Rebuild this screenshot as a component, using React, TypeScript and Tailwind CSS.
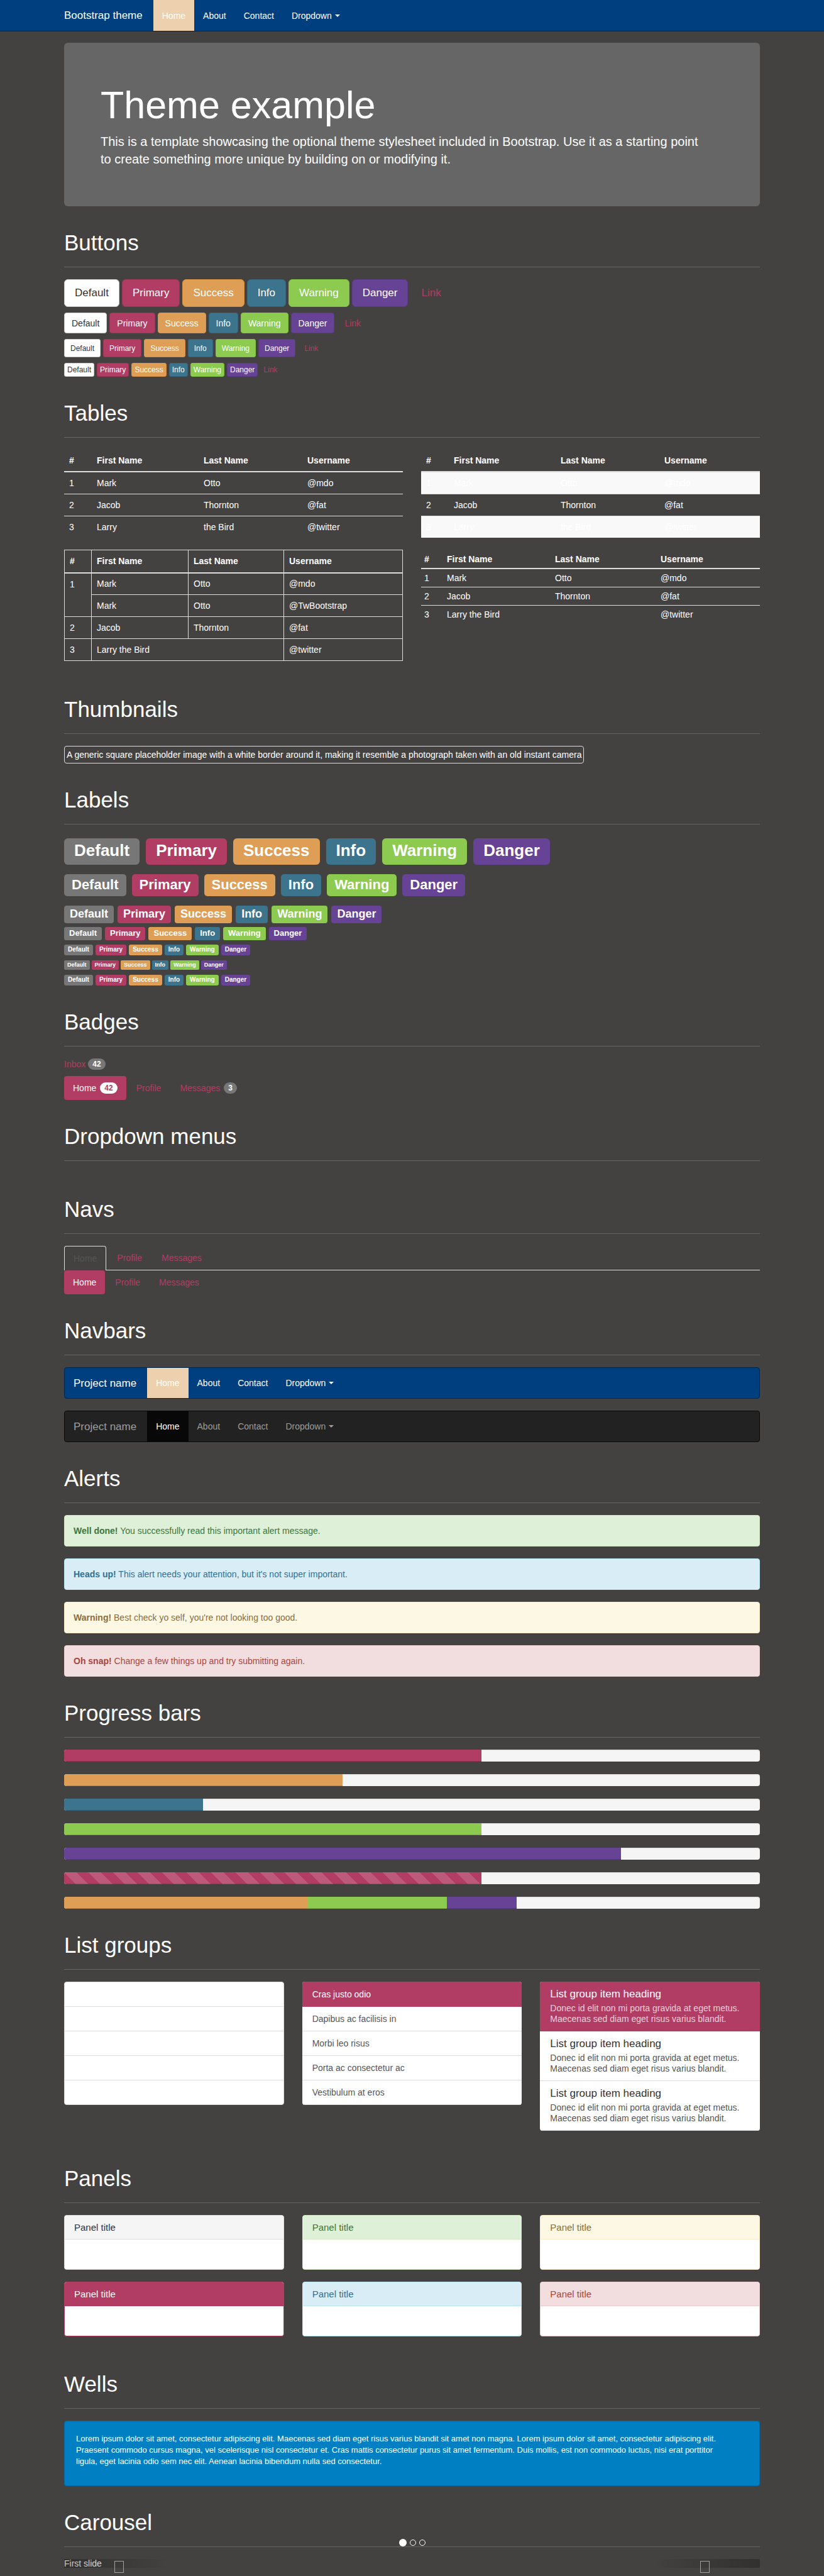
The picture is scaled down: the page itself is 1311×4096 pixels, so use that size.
import type { ReactNode } from 'react';

const BUTTONS = [
  { name: 'Default', tone: 'bg-white border-[#cccccc] text-[#333333]' },
  { name: 'Primary', tone: 'bg-[#b13c64] border-[#9e3659] text-white' },
  { name: 'Success', tone: 'bg-[#de9e56] border-[#da9240] text-white' },
  { name: 'Info', tone: 'bg-[#3c738d] border-[#34657b] text-white' },
  { name: 'Warning', tone: 'bg-[#8cca50] border-[#7fc43c] text-white' },
  { name: 'Danger', tone: 'bg-[#674396] border-[#5b3b85] text-white' },
  { name: 'Link', tone: 'border-transparent text-[#b13c64]' },
];

const BUTTON_SIZES = [
  'h-[44px] px-[16px] text-[17px] rounded-md',
  'h-[33px] px-[11px] text-[14px] rounded',
  'h-[29px] px-[9px] text-[12px] rounded-[3px]',
  'h-[22px] px-[4px] text-[12px] rounded-[3px]',
];

const LABELS = [
  { name: 'Default', tone: 'bg-[#777777]' },
  { name: 'Primary', tone: 'bg-[#b13c64]' },
  { name: 'Success', tone: 'bg-[#de9e56]' },
  { name: 'Info', tone: 'bg-[#3c738d]' },
  { name: 'Warning', tone: 'bg-[#8cca50]' },
  { name: 'Danger', tone: 'bg-[#674396]' },
];

const LABEL_SIZES = [
  { row: 'gap-[10px] mt-[3px]', label: 'text-[26px] leading-[38px] px-[16px] pb-[4px] rounded-md' },
  { row: 'gap-[9px] mt-[15px]', label: 'text-[22px] leading-[33px] px-[12px] pb-[2px] rounded-[5px]' },
  { row: 'gap-[6px] mt-[15px]', label: 'text-[18px] leading-[26px] px-[9px] pb-[2px] rounded' },
  { row: 'gap-[5px] mt-[6px]', label: 'text-[13px] leading-[19px] px-[8px] pb-[2px] rounded-[3px]' },
  { row: 'gap-[4px] mt-[7px]', label: 'text-[10px] leading-[16px] px-[6px] pb-px rounded-[3px]' },
  { row: 'gap-[3px] mt-[8px]', label: 'text-[9px] leading-[14px] px-[5px] pb-px rounded-[2px]' },
  { row: 'gap-[4px] mt-[8px]', label: 'text-[10px] leading-[16px] px-[6px] pb-px rounded-[3px]' },
];

const ALERTS = [
  { lead: 'Well done!', text: 'You successfully read this important alert message.', tone: 'bg-[#dff0d8] border-[#d6e9c6] text-[#3c763d]' },
  { lead: 'Heads up!', text: "This alert needs your attention, but it's not super important.", tone: 'bg-[#d9edf7] border-[#bce8f1] text-[#31708f]' },
  { lead: 'Warning!', text: "Best check yo self, you're not looking too good.", tone: 'bg-[#fcf8e3] border-[#faebcc] text-[#8a6d3b]' },
  { lead: 'Oh snap!', text: 'Change a few things up and try submitting again.', tone: 'bg-[#f2dede] border-[#ebccd1] text-[#a94442]' },
];

const STRIPES =
  'bg-[linear-gradient(45deg,rgba(255,255,255,.15)_25%,transparent_25%,transparent_50%,rgba(255,255,255,.15)_50%,rgba(255,255,255,.15)_75%,transparent_75%,transparent)] bg-[length:39px_39px]';

const BARS = [
  [{ value: 60, tone: 'bg-[#b13c64]' }],
  [{ value: 40, tone: 'bg-[#de9e56]' }],
  [{ value: 20, tone: 'bg-[#3c738d]' }],
  [{ value: 60, tone: 'bg-[#8cca50]' }],
  [{ value: 80, tone: 'bg-[#674396]' }],
  [{ value: 60, tone: `bg-[#b13c64] ${STRIPES}` }],
  [
    { value: 35, tone: 'bg-[#de9e56]' },
    { value: 20, tone: 'bg-[#8cca50]' },
    { value: 10, tone: 'bg-[#674396]' },
  ],
];

const ITEMS = ['Cras justo odio', 'Dapibus ac facilisis in', 'Morbi leo risus', 'Porta ac consectetur ac', 'Vestibulum at eros'];

const PANELS = [
  { border: 'border-[#dddddd]', head: 'bg-[#f5f5f5] text-[#333333]' },
  { border: 'border-[#d6e9c6]', head: 'bg-[#dff0d8] text-[#3c763d]' },
  { border: 'border-[#faebcc]', head: 'bg-[#fcf8e3] text-[#8a6d3b]' },
  { border: 'border-[#b13c64]', head: 'bg-[#b13c64] text-white' },
  { border: 'border-[#bce8f1]', head: 'bg-[#d9edf7] text-[#31708f]' },
  { border: 'border-[#ebccd1]', head: 'bg-[#f2dede] text-[#a94442]' },
];

const HEADINGS = ['#', 'First Name', 'Last Name', 'Username'];
const PEOPLE = [
  ['1', 'Mark', 'Otto', '@mdo'],
  ['2', 'Jacob', 'Thornton', '@fat'],
  ['3', 'Larry', 'the Bird', '@twitter'],
];

function Section({ title, children }: { title: string; children?: ReactNode }) {
  return (
    <section className="flow-root">
      <h1 className="mt-[39px] mb-[19px] border-b border-[#666666] pb-[19px] text-[35px] leading-[38px]">{title}</h1>
      {children}
    </section>
  );
}

function Caret() {
  return <span className="ml-[5px] inline-block border-x-4 border-t-4 border-x-transparent border-t-current align-middle" />;
}

type NavTone = { bar: string; brand: string; active: string; link: string };

const BLUE: NavTone = { bar: 'bg-[#003f7f] border-[#00264c]', brand: 'text-white', active: 'bg-[#edd0ae] text-white', link: 'text-white' };
const DARK: NavTone = { bar: 'bg-[#222222] border-[#080808]', brand: 'text-[#9d9d9d]', active: 'bg-[#080808] text-white', link: 'text-[#9d9d9d]' };

function NavItems({ brand, tone }: { brand: string; tone: NavTone }) {
  return (
    <>
      <a href="#" className={`flex items-center pr-[17px] text-[17px] leading-[19px] ${tone.brand}`}>{brand}</a>
      <a href="#" className={`flex items-center px-[14px] ${tone.active}`}>Home</a>
      <a href="#" className={`flex items-center px-[14px] ${tone.link}`}>About</a>
      <a href="#" className={`flex items-center px-[14px] ${tone.link}`}>Contact</a>
      <button type="button" className={`flex items-center px-[14px] ${tone.link}`}>
        Dropdown
        <Caret />
      </button>
    </>
  );
}

function Navbar({ tone }: { tone: NavTone }) {
  return (
    <nav className={`flex h-[50px] rounded border pl-[14px] ${tone.bar}`}>
      <NavItems brand="Project name" tone={tone} />
    </nav>
  );
}

function PeopleTable({ striped }: { striped?: boolean }) {
  return (
    <table className="w-full table-fixed border-collapse text-left">
      <colgroup>
        <col className="w-[44px]" />
        <col className="w-[170px]" />
        <col className="w-[165px]" />
        <col />
      </colgroup>
      <thead>
        <tr className="h-[35px] border-b-2 border-[#dddddd]">
          {HEADINGS.map((h) => <th key={h} className="px-[8px] font-bold">{h}</th>)}
        </tr>
      </thead>
      <tbody className="divide-y divide-[#dddddd]">
        {PEOPLE.map((row, i) => (
          <tr key={row[0]} className={striped && i % 2 === 0 ? 'h-[35px] bg-[#f9f9f9]' : 'h-[35px]'}>
            {row.map((cell) => <td key={cell} className="px-[8px]">{cell}</td>)}
          </tr>
        ))}
      </tbody>
    </table>
  );
}

function BorderedTable() {
  const td = 'border border-[#dddddd] px-[8px]';
  return (
    <table className="w-full table-fixed border-collapse text-left">
      <colgroup>
        <col className="w-[43px]" />
        <col className="w-[154px]" />
        <col className="w-[152px]" />
        <col />
      </colgroup>
      <thead>
        <tr className="h-[36px]">
          {HEADINGS.map((h) => <th key={h} className="border border-b-2 border-[#dddddd] px-[8px] font-bold">{h}</th>)}
        </tr>
      </thead>
      <tbody>
        <tr className="h-[35px]">
          <td rowSpan={2} className="border border-[#dddddd] px-[8px] pt-[8px] align-top">1</td>
          <td className={td}>Mark</td>
          <td className={td}>Otto</td>
          <td className={td}>@mdo</td>
        </tr>
        <tr className="h-[35px]">
          <td className={td}>Mark</td>
          <td className={td}>Otto</td>
          <td className={td}>@TwBootstrap</td>
        </tr>
        <tr className="h-[35px]">
          <td className={td}>2</td>
          <td className={td}>Jacob</td>
          <td className={td}>Thornton</td>
          <td className={td}>@fat</td>
        </tr>
        <tr className="h-[35px]">
          <td className={td}>3</td>
          <td colSpan={2} className={td}>Larry the Bird</td>
          <td className={td}>@twitter</td>
        </tr>
      </tbody>
    </table>
  );
}

function CondensedTable() {
  return (
    <table className="w-full table-fixed border-collapse text-left">
      <colgroup>
        <col className="w-[36px]" />
        <col className="w-[172px]" />
        <col className="w-[168px]" />
        <col />
      </colgroup>
      <thead>
        <tr className="h-[30px] border-b-2 border-[#dddddd]">
          {HEADINGS.map((h) => <th key={h} className="px-[5px] font-bold">{h}</th>)}
        </tr>
      </thead>
      <tbody className="divide-y divide-[#dddddd]">
        {PEOPLE.slice(0, 2).map((row) => (
          <tr key={row[0]} className="h-[29px]">
            {row.map((cell) => <td key={cell} className="px-[5px]">{cell}</td>)}
          </tr>
        ))}
        <tr className="h-[29px]">
          <td className="px-[5px]">3</td>
          <td colSpan={2} className="px-[5px]">Larry the Bird</td>
          <td className="px-[5px]">@twitter</td>
        </tr>
      </tbody>
    </table>
  );
}

function Badge({ tone, children }: { tone: string; children: ReactNode }) {
  return <span className={`rounded-full px-[7px] text-[12px] leading-[18px] font-bold ${tone}`}>{children}</span>;
}

function Carousel() {
  return (
    <div className="relative leading-[14px]">
      <p>First slide</p>
      <div className="absolute inset-x-0 bottom-[34px] flex items-center justify-center gap-[5px]">
        <button type="button" aria-label="Slide 1" className="size-[12px] rounded-full bg-white" />
        <button type="button" aria-label="Slide 2" className="size-[10px] rounded-full border border-white" />
        <button type="button" aria-label="Slide 3" className="size-[10px] rounded-full border border-white" />
      </div>
      <button type="button" aria-label="Previous" className="absolute inset-y-0 left-0 w-[15%] bg-linear-to-r from-black/50 to-transparent opacity-50">
        <span className="absolute top-[3px] left-1/2 ml-[-3px] h-[19px] w-[15px] border border-white" />
      </button>
      <button type="button" aria-label="Next" className="absolute inset-y-0 right-0 w-[15%] bg-linear-to-l from-black/50 to-transparent opacity-50">
        <span className="absolute top-[3px] right-1/2 mr-[-3px] h-[19px] w-[15px] border border-white" />
      </button>
    </div>
  );
}

export default function App() {
  return (
    <div className="min-h-screen bg-[#444240] pb-[13px] font-['Liberation_Sans',Arial,sans-serif] text-[14px] leading-[18px] text-white">
      <header className={`h-[50px] border-b ${BLUE.bar}`}>
        <nav className="mx-auto flex h-full max-w-[1137px] px-[15px]">
          <NavItems brand="Bootstrap theme" tone={BLUE} />
        </nav>
      </header>

      <main className="mx-auto max-w-[1137px] px-[15px] pt-[18px]">
        <div className="rounded-md bg-[#666666] pt-[66px] pr-[84px] pb-[61px] pl-[58px]">
          <h1 className="text-[61px] leading-[67px]">Theme example</h1>
          <p className="mt-[10px] text-[20px] leading-[28px]">
            This is a template showcasing the optional theme stylesheet included in Bootstrap. Use it as a starting point
            to create something more unique by building on or modifying it.
          </p>
        </div>

        <Section title="Buttons">
          <div className="flex flex-col gap-[9px]">
            {BUTTON_SIZES.map((size) => (
              <div key={size} className="flex gap-[4px]">
                {BUTTONS.map((b) => (
                  <button key={b.name} type="button" className={`border ${size} ${b.tone}`}>{b.name}</button>
                ))}
              </div>
            ))}
          </div>
        </Section>

        <Section title="Tables">
          <div className="grid grid-cols-2 gap-x-[29px] gap-y-[19px] pb-[19px]">
            <PeopleTable />
            <PeopleTable striped />
            <BorderedTable />
            <div><CondensedTable /></div>
          </div>
        </Section>

        <Section title="Thumbnails">
          <div className="flex">
            <div className="rounded border border-[#dddddd] px-[3px] py-[4px]">
              A generic square placeholder image with a white border around it, making it resemble a photograph taken with an old instant camera
            </div>
          </div>
        </Section>

        <Section title="Labels">
          <div className="flex flex-col font-bold">
            {LABEL_SIZES.map((size, i) => (
              <div key={i} className={`flex ${size.row}`}>
                {LABELS.map((l) => <span key={l.name} className={`${size.label} ${l.tone}`}>{l.name}</span>)}
              </div>
            ))}
          </div>
        </Section>

        <Section title="Badges">
          <a href="#" className="flex gap-[4px] text-[#b13c64]">
            Inbox <Badge tone="bg-[#777777] text-white">42</Badge>
          </a>
          <nav className="mt-[10px] flex h-[38px] items-center gap-[2px] text-[#b13c64]">
            <a href="#" className="flex h-full items-center gap-[6px] rounded bg-[#b13c64] px-[14px] text-white">
              Home <Badge tone="bg-white text-[#b13c64]">42</Badge>
            </a>
            <a href="#" className="px-[14px]">Profile</a>
            <a href="#" className="flex gap-[6px] px-[14px]">
              Messages <Badge tone="bg-[#777777] text-white">3</Badge>
            </a>
          </nav>
        </Section>

        <Section title="Dropdown menus" />

        <Section title="Navs">
          <nav className="flex h-[39px] text-[#b13c64]">
            <a href="#" className="flex items-center rounded-t border border-b-0 border-[#dddddd] px-[14px] text-[#555555]">Home</a>
            <div className="flex grow items-center border-b border-[#dddddd] pl-[3px]">
              <a href="#" className="px-[14px]">Profile</a>
              <a href="#" className="px-[17px]">Messages</a>
            </div>
          </nav>
          <nav className="flex h-[38px] items-center gap-[2px] text-[#b13c64]">
            <a href="#" className="flex h-full items-center rounded bg-[#b13c64] px-[14px] text-white">Home</a>
            <a href="#" className="px-[14px]">Profile</a>
            <a href="#" className="px-[14px]">Messages</a>
          </nav>
        </Section>

        <Section title="Navbars">
          <div className="flex flex-col gap-[19px]">
            <Navbar tone={BLUE} />
            <Navbar tone={DARK} />
          </div>
        </Section>

        <Section title="Alerts">
          <div className="flex flex-col gap-[19px]">
            {ALERTS.map((a) => (
              <div key={a.lead} role="alert" className={`rounded border px-[14px] py-[15px] ${a.tone}`}>
                <strong>{a.lead}</strong> {a.text}
              </div>
            ))}
          </div>
        </Section>

        <Section title="Progress bars">
          <div className="flex flex-col gap-[20px]">
            {BARS.map((bar, i) => (
              <div key={i} className="flex h-[19px] overflow-hidden rounded bg-[#f5f5f5] shadow-[inset_0_1px_2px_rgba(0,0,0,0.1)]">
                {bar.map((part) => (
                  <div
                    key={part.tone}
                    role="progressbar"
                    aria-valuenow={part.value}
                    className={`shadow-[inset_0_-1px_0_rgba(0,0,0,0.15)] ${part.tone}`}
                    style={{ width: `${part.value}%` }}
                  />
                ))}
              </div>
            ))}
          </div>
        </Section>

        <Section title="List groups">
          <div className="grid grid-cols-3 items-start gap-[29px] pb-[18px]">
            <ul className="divide-y divide-[#dddddd] overflow-hidden rounded border border-[#dddddd] bg-white">
              {ITEMS.map((item) => <li key={item} className="px-[15px] py-[10px]">{item}</li>)}
            </ul>
            <div className="overflow-hidden rounded bg-white text-[#555555]">
              {ITEMS.map((item, i) => (
                <a
                  key={item}
                  href="#"
                  className={`block border-b px-[16px] pb-[10px] ${i === 0 ? 'border-[#b13c64] bg-[#b13c64] pt-[11px] text-white' : 'border-[#dddddd] pt-[10px]'}`}
                >
                  {item}
                </a>
              ))}
            </div>
            <div className="overflow-hidden rounded bg-white">
              {[0, 1, 2].map((i) => (
                <a
                  key={i}
                  href="#"
                  className={`block border-b px-[16px] py-[10px] ${i === 0 ? 'border-[#b13c64] bg-[#b13c64] text-[#eccfd9]' : 'border-[#dddddd] text-[#555555]'}`}
                >
                  <h4 className={`mb-[5px] text-[17px] leading-[19px] ${i === 0 ? 'text-white' : 'text-[#333333]'}`}>List group item heading</h4>
                  <p className="leading-[17px]">
                    Donec id elit non mi porta gravida at eget metus. Maecenas sed diam eget risus varius blandit.
                  </p>
                </a>
              ))}
            </div>
          </div>
        </Section>

        <Section title="Panels">
          <div className="grid grid-cols-3 gap-x-[29px] gap-y-[19px] pb-[18px]">
            {PANELS.map((p) => (
              <div key={p.border} className={`overflow-hidden rounded border bg-white ${p.border}`}>
                <h3 className={`border-b px-[15px] py-[9px] text-[15px] leading-[19px] ${p.border} ${p.head}`}>Panel title</h3>
                <div className="px-[15px] py-[14px] leading-[19px]">Panel content</div>
              </div>
            ))}
          </div>
        </Section>

        <Section title="Wells">
          <div className="rounded border border-[#0069a5] bg-[#007fc3] pt-[19px] pr-[44px] pb-[29px] pl-[18px] shadow-[inset_0_1px_1px_rgba(0,0,0,0.05)]">
            <p className="text-[13px] leading-[18px]">
              Lorem ipsum dolor sit amet, consectetur adipiscing elit. Maecenas sed diam eget risus varius blandit sit amet non magna. Lorem ipsum dolor sit amet, consectetur adipiscing elit.
              Praesent commodo cursus magna, vel scelerisque nisl consectetur et. Cras mattis consectetur purus sit amet fermentum. Duis mollis, est non commodo luctus, nisi erat porttitor
              ligula, eget lacinia odio sem nec elit. Aenean lacinia bibendum nulla sed consectetur.
            </p>
          </div>
        </Section>

        <Section title="Carousel">
          <Carousel />
        </Section>
      </main>
    </div>
  );
}
